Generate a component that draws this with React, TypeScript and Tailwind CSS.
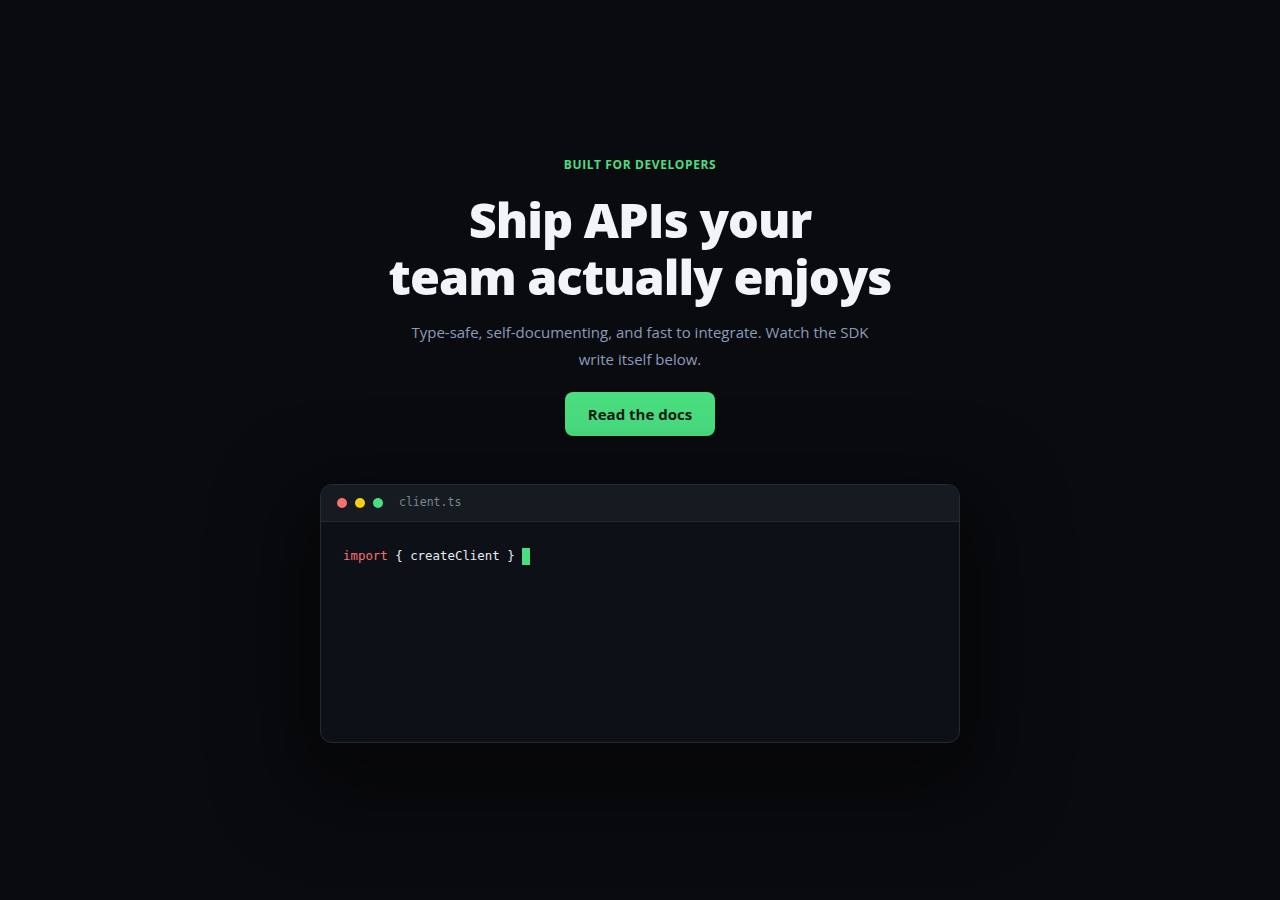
export default function App() {
  return (
    <div
      className="min-h-screen w-full bg-[#0a0b0f] flex items-center justify-center"
      style={{ fontFamily: '"Open Sans", "Noto Sans", sans-serif' }}
    >
      <div className="flex flex-col items-center">
        <p className="text-[12px] font-bold tracking-[0.05em] text-[#4ade80] leading-4">
          BUILT FOR DEVELOPERS
        </p>
        <h1 className="mt-[18px] text-center text-[48.5px] leading-[57px] font-extrabold tracking-[-0.02em] text-[#f1f4f9]">
          Ship APIs your
          <br />
          team actually enjoys
        </h1>
        <p className="mt-[14px] w-[490px] text-center text-[15px] leading-[27px] text-[#8a9bbd]">
          Type-safe, self-documenting, and fast to integrate. Watch the SDK write itself below.
        </p>
        <button className="mt-[19px] h-[44px] w-[150px] rounded-lg bg-[#4ade80] text-[15px] font-bold text-[#0b1a10]">
          Read the docs
        </button>

        <div className="mt-[48px] w-[640px] h-[259px] rounded-xl border border-[#262b33] bg-[#0d1017] overflow-hidden shadow-[0_30px_80px_30px_rgba(0,0,0,0.45)] flex flex-col">
          <div className="h-[37px] bg-[#161a21] border-b border-[#262b33] flex items-center px-4 gap-2">
            <span className="w-[10px] h-[10px] rounded-full bg-[#f87171]" />
            <span className="w-[10px] h-[10px] rounded-full bg-[#facc15]" />
            <span className="w-[10px] h-[10px] rounded-full bg-[#4ade80]" />
            <span
              className="ml-[8px] text-[11.5px] text-[#7d8590]"
              style={{ fontFamily: '"DejaVu Sans Mono", monospace' }}
            >
              client.ts
            </span>
          </div>
          <div
            className="px-[22px] pt-[24px] text-[12.4px] leading-5 flex items-center"
            style={{ fontFamily: '"DejaVu Sans Mono", monospace' }}
          >
            <span className="text-[#f87171]">import</span>
            <span className="text-[#e6edf3] whitespace-pre"> {"{"} createClient {"}"} </span>
            <span className="inline-block w-[8px] h-[17px] bg-[#4ade80]" />
          </div>
        </div>
      </div>
    </div>
  );
}
